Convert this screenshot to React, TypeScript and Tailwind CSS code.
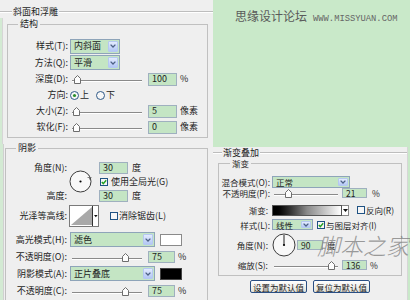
import React from "react";

function Rule({ className = "" }: { className?: string }) {
  return <div className={`h-0 border-y border-t-[#bdbdbd] border-b-white ${className}`} />;
}

function Header({ text, lead, className }: { text: string; lead: string; className: string }) {
  return (
    <div className={`flex items-center ${className}`}>
      <Rule className={lead} />
      <span className="px-[1px] leading-[12px]">{text}</span>
      <Rule className="flex-1" />
    </div>
  );
}

function DropBtn() {
  return (
    <span className="w-[10px] m-[1px] rounded-[1px] border border-[#b5c8f2] bg-linear-to-b from-[#e3ebfe] to-[#b3c7f5] flex items-center justify-center">
      <svg width="6" height="4" viewBox="0 0 6 4">
        <path d="M0.6 0.6 L3 3 L5.4 0.6" fill="none" stroke="#4d6185" strokeWidth="1.3" />
      </svg>
    </span>
  );
}

function Select({ text, className }: { text: string; className: string }) {
  return (
    <div className={`flex border border-[#8ea4b9] bg-[#c4e5c4] ${className}`}>
      <span className="flex-1 pl-[3px] flex items-center">{text}</span>
      <DropBtn />
    </div>
  );
}

function Field({ value, className }: { value: string; className: string }) {
  return (
    <div className={`border border-[#9fb0bf] bg-[#c4e5c4] pl-[3px] flex items-center ${className}`}>
      {value}
    </div>
  );
}

function Slider({ className, thumb }: { className: string; thumb: string }) {
  return (
    <div className={`relative h-[10px] ${className}`}>
      <div className="absolute left-[2px] right-[2px] top-[6px] h-0 border-y border-t-[#8a8a8a] border-b-white" />
      <svg className={`absolute top-[1px] ${thumb}`} width="7" height="9" viewBox="0 0 7 9">
        <path d="M0.5 3.5 L3.5 0.5 L6.5 3.5 L6.5 8.5 L0.5 8.5 Z" fill="#fdfdfd" stroke="#6d6d6d" />
      </svg>
    </div>
  );
}

function Radio({ on }: { on?: boolean }) {
  return (
    <svg width="9" height="9" viewBox="0 0 9 9">
      <circle cx="4.5" cy="4.5" r="4" fill="#f7f7f7" stroke="#2f5987" />
      {on && <circle cx="4.5" cy="4.5" r="1.6" fill="#2b8f2b" />}
    </svg>
  );
}

function Check({ on }: { on?: boolean }) {
  return (
    <svg width="8" height="8" viewBox="0 0 8 8">
      <rect x="0.5" y="0.5" width="7" height="7" fill="#f6f6f6" stroke="#1f5283" />
      {on && <path d="M1.8 4 L3.3 5.6 L6.2 2.3" fill="none" stroke="#21a121" strokeWidth="1.4" />}
    </svg>
  );
}

function Row({ label, lw, h, children }: { label: string; lw: string; h: string; children?: React.ReactNode }) {
  return (
    <div className={`flex items-center ${h}`}>
      <span className={`${lw} text-right shrink-0`}>{label}</span>
      {children}
    </div>
  );
}

function BevelPanel() {
  return (
    <div className="w-[213px] bg-[#efefef] flex flex-col">
      <Header text="斜面和浮雕" lead="w-[12px]" className="h-[18px] pt-[5px]" />
      <div className="flex flex-1">
        <div className="w-[3px] bg-[#d3ead3] border-r border-[#d6d6d6]" />
        <fieldset className="ml-[4px] mr-[5px] mb-[6px] flex-1 border border-[#c0c0c0]">
          <legend className="ml-[10px] px-[2px] leading-[12px]">结构</legend>
          <div className="pt-[8px] flex flex-col">
            <Row label="样式(T):" lw="w-[60px]" h="h-[16px]">
              <Select text="内斜面" className="ml-[2px] w-[50px] h-[15px]" />
            </Row>
            <Row label="方法(Q):" lw="w-[60px]" h="h-[17px]">
              <Select text="平滑" className="ml-[2px] w-[50px] h-[15px]" />
            </Row>
            <Row label="深度(D):" lw="w-[60px]" h="h-[16px]">
              <Slider className="ml-[2px] w-[74px]" thumb="left-[4px]" />
              <Field value="100" className="ml-[4px] w-[29px] h-[13px]" />
              <span className="ml-[3px]">%</span>
            </Row>
            <Row label="方向:" lw="w-[60px]" h="h-[16px]">
              <span className="ml-[2px] flex"><Radio on /></span>
              <span className="ml-[1px]">上</span>
              <span className="ml-[7px] flex"><Radio /></span>
              <span className="ml-[1px]">下</span>
            </Row>
            <Row label="大小(Z):" lw="w-[60px]" h="h-[16px]">
              <Slider className="ml-[2px] w-[74px]" thumb="left-[3px]" />
              <Field value="5" className="ml-[4px] w-[29px] h-[13px]" />
              <span className="ml-[3px]">像素</span>
            </Row>
            <Row label="软化(F):" lw="w-[60px]" h="h-[16px]">
              <Slider className="ml-[2px] w-[74px]" thumb="left-[3px]" />
              <Field value="0" className="ml-[4px] w-[29px] h-[13px]" />
              <span className="ml-[3px]">像素</span>
            </Row>
          </div>
        </fieldset>
      </div>
    </div>
  );
}

function ShadowPanel() {
  return (
    <div className="w-[213px] bg-[#efefef] flex">
      <div className="w-[4px] bg-[#d3ead3] border-r border-[#d0d0d0]" />
      <fieldset className="ml-[1px] w-[203px] border border-b-0 border-[#c0c0c0]">
        <legend className="ml-[10px] px-[2px] leading-[8px]">阴影</legend>
        <div className="pt-[9px] flex flex-col">
          <div className="flex">
            <div className="w-[61px] flex flex-col text-right">
              <span className="h-[13px] leading-[13px]">角度(N):</span>
              <span className="h-[15px]" />
              <span className="h-[13px] leading-[13px]">高度:</span>
            </div>
            <div className="ml-[1px] w-[24px] flex items-center justify-center">
              <svg width="23" height="23" viewBox="0 0 23 23">
                <circle cx="11.5" cy="11.5" r="10.5" fill="#f8f8f8" stroke="#3c3c3c" />
                <circle cx="11.5" cy="11.5" r="1.1" fill="#000" />
                <path d="M18.5 7.5 h4 M20.5 5.5 v4" stroke="#666" strokeWidth="0.8" />
              </svg>
            </div>
            <div className="ml-[7px] flex flex-col">
              <div className="h-[13px] flex items-center">
                <Field value="30" className="w-[29px] h-[12px]" />
                <span className="ml-[4px]">度</span>
              </div>
              <div className="h-[15px] flex items-center">
                <span className="ml-[1px] flex"><Check on /></span>
                <span className="ml-[3px]">使用全局光(G)</span>
              </div>
              <div className="h-[13px] flex items-center">
                <Field value="30" className="w-[29px] h-[12px]" />
                <span className="ml-[4px]">度</span>
              </div>
            </div>
          </div>

          <div className="mt-[3px] h-[22px] flex items-center">
            <span className="w-[61px] text-right">光泽等高线:</span>
            <svg className="ml-[2px]" width="30" height="22" viewBox="0 0 30 22">
              <rect x="0.5" y="0.5" width="29" height="21" fill="#fff" stroke="#7a7a7a" />
              <path d="M2 20 L23 2 L23 20 Z" fill="#a9a9a9" />
              <line x1="23.5" y1="1" x2="23.5" y2="21" stroke="#333" />
              <path d="M25 10 h3.6 l-1.8 2.2 z" fill="#111" />
            </svg>
            <span className="ml-[11px] flex"><Check /></span>
            <span className="ml-[1px]">消除锯齿(L)</span>
          </div>

          <div className="mt-[4px] flex flex-col">
            <Row label="高光模式(H):" lw="w-[61px]" h="h-[17px]">
              <Select text="滤色" className="ml-[3px] w-[85px] h-[15px]" />
              <span className="ml-[5px] w-[22px] h-[12px] bg-white border border-[#8a8a8a]" />
            </Row>
            <Row label="不透明度(O):" lw="w-[61px]" h="h-[17px]">
              <Slider className="ml-[3px] w-[74px]" thumb="left-[52px]" />
              <Field value="75" className="ml-[4px] w-[27px] h-[12px]" />
              <span className="ml-[3px]">%</span>
            </Row>
            <Row label="阴影模式(A):" lw="w-[61px]" h="h-[17px]">
              <Select text="正片叠底" className="ml-[3px] w-[85px] h-[15px]" />
              <span className="ml-[5px] w-[22px] h-[12px] bg-black border border-[#444]" />
            </Row>
            <Row label="不透明度(C):" lw="w-[61px]" h="h-[17px]">
              <Slider className="ml-[3px] w-[74px]" thumb="left-[52px]" />
              <Field value="75" className="ml-[4px] w-[27px] h-[12px]" />
              <span className="ml-[3px]">%</span>
            </Row>
          </div>
        </div>
      </fieldset>
    </div>
  );
}

function Btn({ text }: { text: string }) {
  return (
    <div className="w-[57px] h-[13px] rounded-[2px] border border-[#2a4f84] bg-linear-to-b from-white to-[#e2e2da] flex items-center justify-center text-[8.5px] leading-[10px]">
      {text}
    </div>
  );
}

function GradientPanel() {
  return (
    <div className="relative mt-[3px] w-[195px] bg-[#efefef] border-r border-[#d6d6d6] flex flex-col">
      <Header text="渐变叠加" lead="w-[9px]" className="h-[12px]" />
      <fieldset className="ml-[5px] mr-[5px] border border-[#c0c0c0] text-[8.5px]">
        <legend className="ml-[11px] px-[2px] leading-[8px]">渐变</legend>
        <div className="pt-[9px] pb-[5px] flex flex-col">
          <Row label="混合模式(O):" lw="w-[51px]" h="h-[12px]">
            <Select text="正常" className="ml-[2px] w-[78px] h-[12px]" />
          </Row>
          <Row label="不透明度(P):" lw="w-[51px]" h="h-[10px]">
            <Slider className="ml-[2px] w-[68px]" thumb="left-[13px]" />
            <Field value="21" className="ml-[2px] w-[25px] h-[10px]" />
            <span className="ml-[5px]">%</span>
          </Row>
          <Row label="渐变:" lw="w-[49px]" h="mt-[6px] h-[12px]">
            <span className="ml-[4px] w-[70px] h-[11px] border border-[#555] bg-linear-to-r from-black via-[#8a8a8a] to-white" />
            <span className="w-[7px] h-[11px] border border-l-0 border-[#888] bg-white flex items-center justify-center">
              <svg width="5" height="3" viewBox="0 0 5 3"><path d="M0 0 H5 L2.5 3 Z" fill="#111" /></svg>
            </span>
            <span className="ml-[8px] flex"><Check /></span>
            <span className="ml-[1px]">反向(R)</span>
          </Row>
          <Row label="样式(L):" lw="w-[51px]" h="mt-[3px] h-[11px]">
            <Select text="线性" className="ml-[2px] w-[41px] h-[11px]" />
            <span className="ml-[4px] flex"><Check on /></span>
            <span className="ml-[1px]">与图层对齐(I)</span>
          </Row>
          <Row label="角度(N):" lw="w-[49px]" h="mt-[3px] h-[24px]">
            <svg className="ml-[4px]" width="24" height="24" viewBox="0 0 24 24">
              <circle cx="12" cy="12" r="11" fill="#f8f8f8" stroke="#3c3c3c" />
              <line x1="12" y1="12" x2="12" y2="2" stroke="#222" />
              <circle cx="12" cy="12" r="1.1" fill="#000" />
            </svg>
            <Field value="90" className="ml-[1px] w-[26px] h-[10px]" />
            <span className="ml-[4px]">度</span>
          </Row>
          <Row label="缩放(S):" lw="w-[49px]" h="mt-[3px] h-[10px]">
            <Slider className="ml-[4px] w-[68px]" thumb="left-[56px]" />
            <Field value="136" className="ml-[2px] w-[25px] h-[10px]" />
            <span className="ml-[3px]">%</span>
          </Row>
        </div>
      </fieldset>
      <div className="mt-[4px] flex justify-center gap-[6px]">
        <Btn text="设置为默认值" />
        <Btn text="复位为默认值" />
      </div>
      {/* site watermark over the panel */}
      <span className="absolute left-[104px] top-[87px] whitespace-nowrap text-[23px] leading-[22px] italic font-light text-[#7d7d7d] opacity-75">
        脚本之家
      </span>
    </div>
  );
}

export default function App() {
  return (
    <div className="w-[410px] h-[300px] overflow-hidden bg-[#c9e9c9] font-['Noto_Sans_CJK_SC',sans-serif] text-[9px] leading-[12px] text-[#1e1e1e] flex flex-col">
      <div className="flex h-[144px]">
        <BevelPanel />
        <div className="flex-1 pl-[22px] pt-[9px] flex items-baseline gap-[6px]">
          <span className="text-[12px] leading-[14px] text-[#5a5a5a]">思缘设计论坛</span>
          <span className="font-['Liberation_Mono',monospace] text-[8.8px] text-[#666]">WWW.MISSYUAN.COM</span>
        </div>
      </div>
      <div className="flex h-[156px]">
        <ShadowPanel />
        <GradientPanel />
      </div>
    </div>
  );
}
